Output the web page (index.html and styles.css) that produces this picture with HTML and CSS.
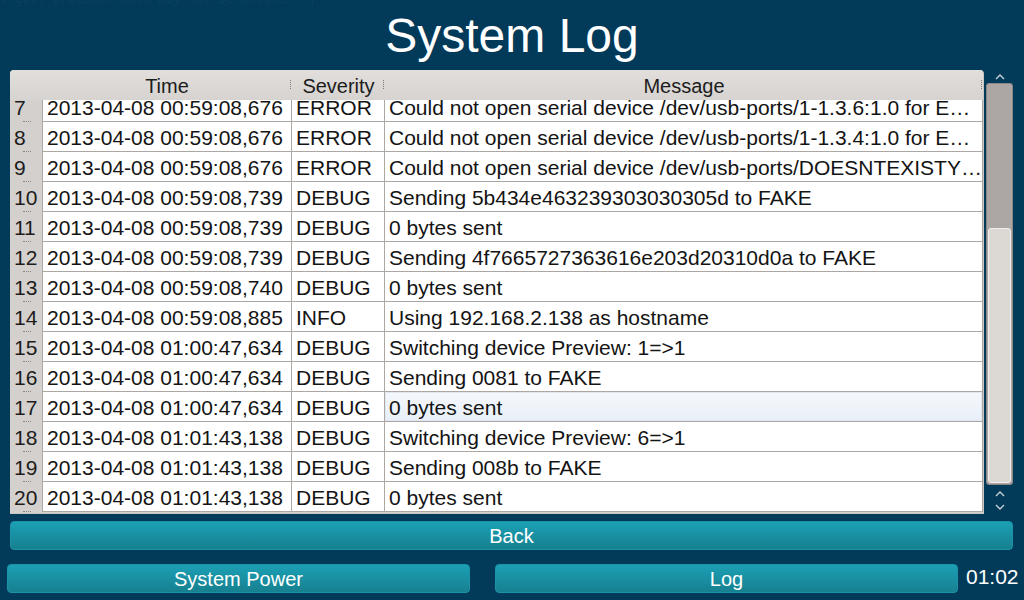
FILE: index.html
```html
<!DOCTYPE html>
<html>
<head>
<meta charset="utf-8">
<link rel="stylesheet" href="styles.css">
</head>
<body>
<div class="ghost">t got, protocol data may not be secure"!'|</div>
<div class="title">System Log</div>
<div class="main">
  <div class="table">
    <div class="head">
      <div class="h corner"></div>
      <div class="h time grip">Time</div>
      <div class="h sev grip">Severity</div>
      <div class="h msg grip">Message</div>
    </div>
    <div class="body">
      <div class="rows">
        <div class="row"><div class="num">7</div><div class="c time">2013-04-08 00:59:08,676</div><div class="c sev">ERROR</div><div class="c msg">Could not open serial device /dev/usb-ports/1-1.3.6:1.0 for E…</div></div>
        <div class="row"><div class="num">8</div><div class="c time">2013-04-08 00:59:08,676</div><div class="c sev">ERROR</div><div class="c msg">Could not open serial device /dev/usb-ports/1-1.3.4:1.0 for E…</div></div>
        <div class="row"><div class="num">9</div><div class="c time">2013-04-08 00:59:08,676</div><div class="c sev">ERROR</div><div class="c msg">Could not open serial device /dev/usb-ports/DOESNTEXISTY…</div></div>
        <div class="row"><div class="num">10</div><div class="c time">2013-04-08 00:59:08,739</div><div class="c sev">DEBUG</div><div class="c msg">Sending 5b434e463239303030305d to FAKE</div></div>
        <div class="row"><div class="num">11</div><div class="c time">2013-04-08 00:59:08,739</div><div class="c sev">DEBUG</div><div class="c msg">0 bytes sent</div></div>
        <div class="row"><div class="num">12</div><div class="c time">2013-04-08 00:59:08,739</div><div class="c sev">DEBUG</div><div class="c msg">Sending 4f7665727363616e203d20310d0a to FAKE</div></div>
        <div class="row"><div class="num">13</div><div class="c time">2013-04-08 00:59:08,740</div><div class="c sev">DEBUG</div><div class="c msg">0 bytes sent</div></div>
        <div class="row"><div class="num">14</div><div class="c time">2013-04-08 00:59:08,885</div><div class="c sev">INFO</div><div class="c msg">Using 192.168.2.138 as hostname</div></div>
        <div class="row"><div class="num">15</div><div class="c time">2013-04-08 01:00:47,634</div><div class="c sev">DEBUG</div><div class="c msg">Switching device Preview: 1=&gt;1</div></div>
        <div class="row"><div class="num">16</div><div class="c time">2013-04-08 01:00:47,634</div><div class="c sev">DEBUG</div><div class="c msg">Sending 0081 to FAKE</div></div>
        <div class="row"><div class="num">17</div><div class="c time">2013-04-08 01:00:47,634</div><div class="c sev">DEBUG</div><div class="c msg current">0 bytes sent</div></div>
        <div class="row"><div class="num">18</div><div class="c time">2013-04-08 01:01:43,138</div><div class="c sev">DEBUG</div><div class="c msg">Switching device Preview: 6=&gt;1</div></div>
        <div class="row"><div class="num">19</div><div class="c time">2013-04-08 01:01:43,138</div><div class="c sev">DEBUG</div><div class="c msg">Sending 008b to FAKE</div></div>
        <div class="row"><div class="num">20</div><div class="c time">2013-04-08 01:01:43,138</div><div class="c sev">DEBUG</div><div class="c msg">0 bytes sent</div></div>
      </div>
    </div>
  </div>
  <div class="sb">
    <div class="arr top"><svg width="10" height="7" viewBox="0 0 10 7"><polyline points="1,6 5,2 9,6" fill="none" stroke="#c7d0d6" stroke-width="1.4"/></svg></div>
    <div class="track"><div class="handle"></div></div>
    <div class="arr"><svg width="10" height="7" viewBox="0 0 10 7"><polyline points="1,6 5,2 9,6" fill="none" stroke="#c7d0d6" stroke-width="1.4"/></svg></div>
    <div class="arr"><svg width="10" height="7" viewBox="0 0 10 7"><polyline points="1,1 5,5 9,1" fill="none" stroke="#c7d0d6" stroke-width="1.4"/></svg></div>
  </div>
</div>
<div class="btn back">Back</div>
<div class="bottom">
  <div class="btn half">System Power</div>
  <div class="btn half">Log</div>
  <div class="clock">01:02</div>
</div>
</body>
</html>
```
FILE: styles.css
```css
body {
  margin: 0;
  width: 1024px;
  height: 600px;
  overflow: hidden;
  position: relative;
  background: #023a5a;
  font-family: "Liberation Sans", Arial, sans-serif;
}
.ghost {
  position: absolute;
  top: -9px;
  left: 0;
  font-family: "DejaVu Sans Mono", monospace;
  font-size: 12.5px;
  color: rgba(255, 255, 255, 0.045);
  white-space: nowrap;
}
.title {
  height: 70px;
  line-height: 71px;
  text-align: center;
  color: #fff;
  font-size: 48px;
}
.main {
  display: flex;
  height: 444px;
  padding-left: 10px;
}
.table {
  width: 974px;
  height: 444px;
  background: #d4d0cd;
  border-radius: 4px 4px 0 0;
  display: flex;
  flex-direction: column;
  overflow: hidden;
  border-right: 1px solid #c9c5c2;
  border-bottom: 1px solid #c9c5c2;
  box-sizing: border-box;
}
.head {
  display: flex;
  height: 30px;
  flex: none;
  background: linear-gradient(#e1dedb, #d6d3d0);
  font-size: 20px;
  color: #1c1c1c;
}
.h {
  line-height: 32px;
  text-align: center;
  position: relative;
}
.grip::after {
  content: "";
  position: absolute;
  right: 1px;
  top: 10px;
  height: 9px;
  border-right: 1px dotted #7d7873;
}
.corner { width: 32px; }
.time { width: 250px; }
.sev { width: 93px; }
.msg { width: 598px; }
.body {
  flex: 1;
  overflow: hidden;
}
.rows { margin-top: -8px; }
.row {
  display: flex;
  height: 30px;
}
.num {
  width: 32px;
  padding-left: 4px;
  box-sizing: border-box;
  line-height: 32px;
  font-size: 21px;
  color: #1c1c1c;
  position: relative;
  background: #d4d0cd;
}
.num::after {
  content: "";
  position: absolute;
  left: 13px;
  bottom: 0px;
  width: 8px;
  border-top: 1px dotted #8a857f;
}
.c {
  background: #fff;
  border-right: 1px solid #aca7a3;
  border-bottom: 1px solid #aca7a3;
  box-sizing: border-box;
  padding-left: 4px;
  padding-top: 1px;
  line-height: 29px;
  font-size: 21px;
  white-space: nowrap;
  overflow: hidden;
  color: #141414;
}
.c.time { border-left: 1px solid #aca7a3; }
.c.current {
  background: linear-gradient(#f5f8fc, #e8eff8);
  box-shadow: inset 0 0 0 1px #dfe7f1;
}
.sb {
  width: 40px;
  display: flex;
  flex-direction: column;
  padding-left: 2px;
  box-sizing: border-box;
}
.arr {
  width: 27px;
  height: 14px;
  display: flex;
  align-items: center;
  justify-content: center;
}
.arr.top { height: 13px; }
.track {
  width: 27px;
  height: 402px;
  background: #aca7a5;
  border: 1px solid #8d8885;
  border-radius: 3px;
  box-sizing: border-box;
  padding-top: 144px;
  padding-left: 1px;
  margin-bottom: 1px;
}
.handle {
  width: 23px;
  height: 255px;
  background: #dcd9d5;
  border: 1px solid #f1efed;
  border-radius: 3px;
  box-sizing: border-box;
}
.btn {
  background: linear-gradient(#1ca0b5, #16808f);
  border: 1px solid #1b93a6;
  border-radius: 4px;
  color: #fff;
  font-size: 20px;
  text-align: center;
  line-height: 29px;
  height: 29px;
  box-sizing: border-box;
}
.back {
  margin: 7px 0 0 10px;
  width: 1003px;
}
.bottom {
  display: flex;
  align-items: center;
  margin-top: 14px;
  padding-left: 7px;
  gap: 25px;
}
.half { width: 463px; }
.clock {
  margin-left: -17px;
  padding-bottom: 4px;
  color: #fff;
  font-size: 21px;
}
```
